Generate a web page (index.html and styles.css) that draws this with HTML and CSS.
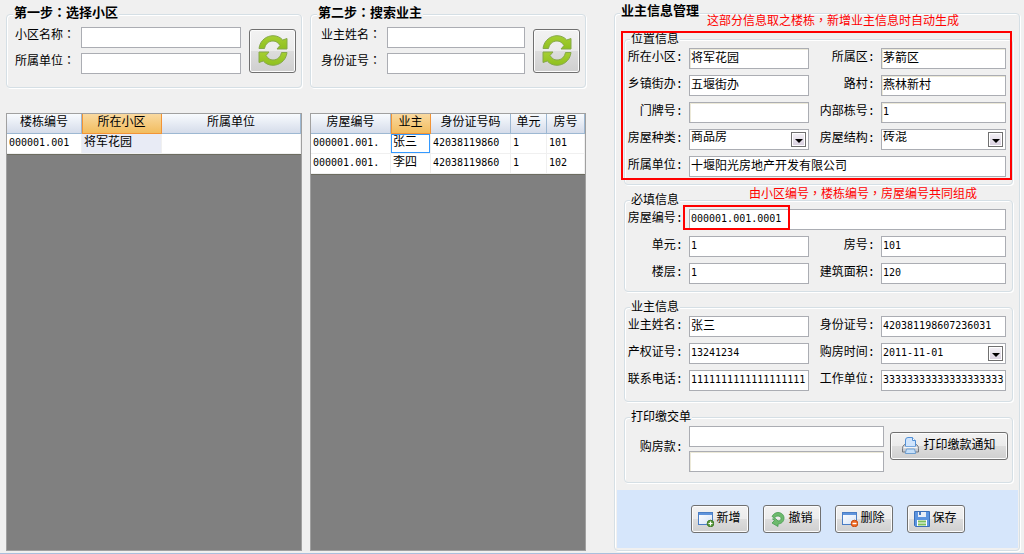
FILE: index.html
```html
<!DOCTYPE html>
<html lang="zh-CN">

<head>
  <meta charset="UTF-8">
  <meta name="viewport" content="width=device-width, initial-scale=1.0">
  <title>业主信息管理</title>
  <link rel="stylesheet" href="styles.css">
</head>

<body>
  <svg class="symbols" width="0" height="0" aria-hidden="true">
    <defs>
      <linearGradient id="green" x1="0" y1="0" x2="0" y2="1">
        <stop offset="0" stop-color="#a6cf32" />
        <stop offset="1" stop-color="#8fc01f" />
      </linearGradient>
      <linearGradient id="paper" x1="0" y1="0" x2="1" y2="1">
        <stop offset="0" stop-color="#ffffff" />
        <stop offset="1" stop-color="#d5e3f7" />
      </linearGradient>
    </defs>
    <symbol id="icon-refresh" viewBox="0 0 30 31">
      <g fill="url(#green)" stroke="#86a84a" stroke-width="1" stroke-linejoin="round">
        <path d="M1 13.500C2 5 9 .7 15 .7c4 0 7.500 1.600 9.700 4.300L29 3.500v10.500H19l3-3.500C20 7.500 18 6 15 6c-4.500 0-7.500 3-8.500 7.500z" />
        <path d="M29 17.500C28 26 21 30.300 15 30.300c-4 0-7.500-1.600-9.700-4.300L1 27.500V17h10l-3 3.500c2 3 4 4.500 7 4.500 4.500 0 7.500-3 8.500-7.500z" />
      </g>
    </symbol>
    <symbol id="icon-window" viewBox="0 0 16 16">
      <rect x=".5" y="1.500" width="14" height="12" fill="url(#paper)" stroke="#4a7dc4" />
      <path d="M1 2h13v2H1z" fill="#5f94dc" />
    </symbol>
  </svg>

  <main class="page">
    <section class="column">
      <fieldset class="step">
        <legend>第一步<span class="punct" lang="zh-TW">：</span>选择小区</legend>
        <div class="search">
          <div class="search-fields">
            <label for="areaName">小区名称<span class="punct" lang="zh-TW">：</span></label>
            <input id="areaName" type="text">
            <label for="areaUnit">所属单位<span class="punct" lang="zh-TW">：</span></label>
            <input id="areaUnit" type="text">
          </div>
          <button type="button" class="refresh" aria-label="刷新"><svg width="30" height="31"><use href="#icon-refresh" /></svg></button>
        </div>
      </fieldset>

      <div class="grid-view">
        <table>
          <colgroup>
            <col class="w75">
            <col class="w80">
            <col>
          </colgroup>
          <thead>
            <tr>
              <th>楼栋编号</th>
              <th class="sorted">所在小区</th>
              <th>所属单位</th>
            </tr>
          </thead>
          <tbody>
            <tr>
              <td class="num">000001.001</td>
              <td class="picked">将军花园</td>
              <td></td>
            </tr>
          </tbody>
        </table>
      </div>
    </section>

    <section class="column">
      <fieldset class="step step-two">
        <legend>第二步<span class="punct" lang="zh-TW">：</span>搜索业主</legend>
        <div class="search">
          <div class="search-fields">
            <label for="findName">业主姓名<span class="punct" lang="zh-TW">：</span></label>
            <input id="findName" type="text">
            <label for="findCard">身份证号<span class="punct" lang="zh-TW">：</span></label>
            <input id="findCard" type="text">
          </div>
          <button type="button" class="refresh" aria-label="搜索"><svg width="30" height="31"><use href="#icon-refresh" /></svg></button>
        </div>
      </fieldset>

      <div class="grid-view">
        <table>
          <colgroup>
            <col class="w80">
            <col class="w40">
            <col class="w80">
            <col class="w36">
            <col>
          </colgroup>
          <thead>
            <tr>
              <th>房屋编号</th>
              <th class="sorted">业主</th>
              <th>身份证号码</th>
              <th>单元</th>
              <th>房号</th>
            </tr>
          </thead>
          <tbody>
            <tr>
              <td class="num">000001.001.</td>
              <td class="focused">张三</td>
              <td class="num">42038119860</td>
              <td class="num">1</td>
              <td class="num">101</td>
            </tr>
            <tr>
              <td class="num">000001.001.</td>
              <td>李四</td>
              <td class="num">42038119860</td>
              <td class="num">1</td>
              <td class="num">102</td>
            </tr>
          </tbody>
        </table>
      </div>
    </section>

    <section class="column manage-column">
      <fieldset class="manage">
        <legend>业主信息管理</legend>

        <div class="group">
          <fieldset>
            <legend>位置信息</legend>
            <div class="form">
              <label for="area">所在小区:</label>
              <input id="area" class="locked" type="text" value="将军花园" readonly>
              <label for="district">所属区:</label>
              <input id="district" class="locked" type="text" value="茅箭区" readonly>

              <label for="town">乡镇街办:</label>
              <input id="town" type="text" value="五堰街办">
              <label for="road">路村:</label>
              <input id="road" class="locked" type="text" value="燕林新村" readonly>

              <label for="door">门牌号:</label>
              <input id="door" class="locked" type="text" readonly>
              <label for="building">内部栋号:</label>
              <input id="building" class="locked num" type="text" value="1" readonly>

              <label for="kind">房屋种类:</label>
              <div class="combo">
                <select id="kind">
                  <option>商品房</option>
                </select>
                <span class="arrow"></span>
              </div>
              <label for="structure">房屋结构:</label>
              <div class="combo">
                <select id="structure">
                  <option>砖混</option>
                </select>
                <span class="arrow"></span>
              </div>

              <label for="unitName">所属单位:</label>
              <input id="unitName" class="wide" type="text" value="十堰阳光房地产开发有限公司">
            </div>
          </fieldset>
          <div class="mark mark-location"></div>
          <p class="note note-location">这部分信息取之楼栋<span class="punct" lang="zh-TW">，</span>新增业主信息时自动生成</p>
        </div>

        <div class="group">
          <fieldset>
            <legend>必填信息</legend>
            <div class="form">
              <label for="houseNo">房屋编号:</label>
              <div class="wide house-no">
                <input id="houseNo" class="num" type="text" value="000001.001.0001">
                <div class="mark mark-house"></div>
              </div>

              <label for="entrance">单元:</label>
              <input id="entrance" class="num" type="text" value="1">
              <label for="room">房号:</label>
              <input id="room" class="num" type="text" value="101">

              <label for="floor">楼层:</label>
              <input id="floor" class="num" type="text" value="1">
              <label for="size">建筑面积:</label>
              <input id="size" class="num" type="text" value="120">
            </div>
          </fieldset>
          <p class="note note-house">由小区编号<span class="punct" lang="zh-TW">，</span>楼栋编号<span class="punct" lang="zh-TW">，</span>房屋编号共同组成</p>
        </div>

        <div class="group">
          <fieldset class="roomy">
            <legend>业主信息</legend>
            <div class="form">
              <label for="owner">业主姓名:</label>
              <input id="owner" type="text" value="张三">
              <label for="card">身份证号:</label>
              <input id="card" class="num" type="text" value="420381198607236031">

              <label for="deed">产权证号:</label>
              <input id="deed" class="num" type="text" value="13241234">
              <label for="bought">购房时间:</label>
              <div class="combo">
                <input id="bought" class="num" type="text" value="2011-11-01">
                <button type="button" class="arrow" aria-label="选择日期"></button>
              </div>

              <label for="phone">联系电话:</label>
              <input id="phone" class="num" type="text" value="1111111111111111111">
              <label for="work">工作单位:</label>
              <input id="work" class="num" type="text" value="33333333333333333333">
            </div>
          </fieldset>
        </div>

        <div class="group">
          <fieldset class="roomy print">
            <legend>打印缴交单</legend>
            <div class="payment">
              <label for="payment">购房款:</label>
              <div class="payment-fields">
                <input id="payment" type="text">
                <input class="locked" type="text" aria-label="购房款大写" readonly>
              </div>
              <button type="button" class="btn btn-print">
                <svg width="17" height="17" viewBox="0 0 17 17">
                  <path d="M2.500 7.500h12q2 1.500 2 4v3.500h-16v-3.500q0-2.500 2-4z" fill="#c9ccd1" stroke="#72767c" />
                  <path d="M3.500 9.500V3q0-2.500 2.500-2.500h4.500l3 3v6z" fill="#cfe4fc" stroke="#5290d6" />
                  <path d="M10.500.5v3h3" fill="#fff" stroke="#5290d6" />
                  <path d="M1.500 10.500h14" stroke="#f4f5f6" stroke-width="1.500" />
                  <path d="M4.500 12h8l1.200 4.500H3.300z" fill="#c5dff9" stroke="#6f9fd0" />
                </svg>
                <span>打印缴款通知</span>
              </button>
            </div>
          </fieldset>
        </div>

        <div class="actions">
          <button type="button" class="btn">
            <svg width="16" height="16" viewBox="0 0 16 16">
              <use href="#icon-window" />
              <circle cx="12.500" cy="12.500" r="3.300" fill="#5b9a3c" stroke="#3f7a28" />
              <path d="M12.500 10.500v4M10.500 12.500h4" stroke="#fff" stroke-width="1.200" />
            </svg>
            <span>新增</span>
          </button>
          <button type="button" class="btn">
            <svg width="16" height="16" viewBox="0 0 16 16">
              <path d="M2 5.500C3.500 2.800 5.500 1.500 8 1.500c3.500 0 6 2.500 6 5.500 0 3.500-2.500 5.700-6 6V15.500L2 12l2.500-2.500L2.500 8l3-.5 2.500 2.500c2 0 3-1 3-2.500S9.500 5 8 5C6 5 5 6 4.500 7z" fill="#6dba6d" stroke="#459a50" stroke-width=".8" stroke-linejoin="round" />
            </svg>
            <span>撤销</span>
          </button>
          <button type="button" class="btn">
            <svg width="16" height="16" viewBox="0 0 16 16">
              <use href="#icon-window" />
              <circle cx="12.500" cy="12.500" r="3.300" fill="#ee6a22" stroke="#c94a10" />
              <path d="M10.500 12.500h4" stroke="#fff" stroke-width="1.400" />
            </svg>
            <span>删除</span>
          </button>
          <button type="button" class="btn">
            <svg width="16" height="16" viewBox="0 0 16 16">
              <path d="M.5.5h15v15h-14l-1-1z" fill="#5b94e0" stroke="#3a6fba" />
              <path d="M4 1h8v5H4z" fill="#e8eef7" />
              <path d="M5 1h2v3H5z" fill="#4778bd" />
              <path d="M3 9h10v6H3z" fill="#fff" />
              <path d="M4 10.500h8M4 13.500h8" stroke="#7cc05c" stroke-width="2" />
            </svg>
            <span>保存</span>
          </button>
        </div>
      </fieldset>
    </section>
  </main>
</body>

</html>
```

FILE: styles.css
```css
* {
  box-sizing: border-box;
}

body {
  margin: 0;
  background-color: #f0f0f0;
  color: #000;
}

body,
input,
select,
button {
  font-family: "Liberation Mono", "Noto Sans CJK SC", monospace;
  font-size: 12px;
  line-height: 14px;
}

.symbols {
  position: absolute;
}

.punct {
  font-family: "Noto Sans CJK TC", sans-serif;
}

.page {
  display: grid;
  grid-template-columns: 296fr 276fr 426fr;
  gap: 8px;
  min-height: 100vh;
  padding: 4px 4px 2px 6px;
  border-bottom: 1px solid #a9bfdd;
}

.column {
  display: flex;
  flex-direction: column;
  min-width: 0;
}

.manage-column {
  padding-left: 20px;
}

/* group boxes */

fieldset {
  min-width: 0;
  margin: 0;
  padding: 0 6px 7px 4px;
  border: 1px solid #d5dfe5;
  border-radius: 4px;
  box-shadow: 1px 1px 0 #fff, inset 1px 1px 0 #fff;
}

legend {
  margin-left: 1px;
  padding: 2px 1px 1px;
  background-color: #f0f0f0;
}

.step > legend,
.manage > legend {
  padding: 0 1px 2px;
  font-size: 13px;
  font-weight: bold;
  line-height: 16px;
}

.step {
  padding: 3px 5px 13px 8px;
}

.step > legend {
  margin-left: -2px;
}

.step-two {
  padding-left: 10px;
}

.step-two > legend {
  margin-left: -4px;
}

.search {
  display: flex;
  align-items: center;
  gap: 8px;
}

.search-fields {
  display: grid;
  flex: 1;
  grid-template-columns: 66px 1fr;
  gap: 5px 0;
}

.search-fields label {
  white-space: nowrap;
}

/* text boxes */

input,
select {
  width: 100%;
  min-width: 0;
  height: 21px;
  margin: 0;
  padding: 0 0 4px 1px;
  border: 1px solid #abadb3;
  border-radius: 0;
  background-color: #fff;
  color: #000;
  outline: none;
}

select {
  appearance: none;
}

.num {
  font-family: "DejaVu Sans Mono", monospace;
  font-size: 10px;
}

input.num {
  padding-bottom: 2px;
}

.locked {
  box-shadow: inset 1px 1px 0 #ece9d8;
}

.combo {
  position: relative;
}

.combo select,
.combo input {
  display: block;
}

.arrow {
  position: absolute;
  top: 3px;
  right: 3px;
  width: 15px;
  height: 15px;
  padding: 0;
  border: 1px solid #707070;
  background: linear-gradient(#f4f2f6, #d9cfe0);
  box-shadow: inset 0 0 0 1px #fff;
  pointer-events: none;
}

button.arrow {
  pointer-events: auto;
}

.arrow::after {
  content: "";
  position: absolute;
  top: 6px;
  left: 3px;
  border: 4px solid transparent;
  border-top-color: #000;
  border-bottom: 0;
}

/* buttons */

.btn,
.refresh {
  display: flex;
  align-items: center;
  justify-content: center;
  padding: 0;
  border: 1px solid #707070;
  border-radius: 3px;
  background: linear-gradient(#f2f2f2, #ebebeb 50%, #dddddd 50%, #cfcfcf);
  box-shadow: inset 0 0 0 1px #fcfcfc;
  color: #000;
  cursor: pointer;
}

.refresh {
  width: 47px;
  height: 44px;
}

.btn {
  gap: 2px;
  width: 58px;
  height: 28px;
  padding-bottom: 1px;
}

.btn-print {
  gap: 4px;
  width: 118px;
}

/* data grids */

.grid-view {
  flex: 1;
  margin-top: 25px;
  border: 1px solid #a0a0a0;
  background-color: #808080;
}

table {
  width: 100%;
  border-spacing: 0;
  border-bottom: 1px solid #6c6c60;
  background-color: #fff;
  table-layout: fixed;
}

.w36 {
  width: 36px;
}

.w40 {
  width: 40px;
}

.w75 {
  width: 75px;
}

.w80 {
  width: 80px;
}

th,
td {
  height: 20px;
  overflow: hidden;
  white-space: nowrap;
}

th {
  padding: 0 0 2px;
  border-right: 1px solid #9db8d2;
  border-bottom: 1px solid #9db8d2;
  background: linear-gradient(#f8fbfe, #d5dcea);
  font-weight: normal;
}

th.sorted {
  border-color: #f29436;
  background: linear-gradient(#f9d9a0, #f2bd5f);
  box-shadow: inset 1px 0 0 #f29436;
}

td {
  padding: 0 2px 2px;
  border-right: 1px solid #f0f0f0;
  border-bottom: 1px solid #f0f0f0;
}

td.picked {
  background-color: #e8ebf5;
}

td.focused {
  box-shadow: inset 0 0 0 1px #3399ff;
}

/* owner form */

.manage {
  flex: 1;
  padding: 9px 1px 0 2px;
}

.manage > legend {
  margin-left: 3px;
}

.group {
  position: relative;
  margin: 0 5px 7px 7px;
}

.roomy {
  padding-bottom: 10px;
}

.print {
  padding-right: 4px;
}

.form {
  display: grid;
  grid-template-columns: 54px 120fr 60px 125fr;
  align-items: center;
  gap: 6px;
}

.form label,
.payment label {
  display: flex;
  justify-content: flex-end;
  padding-bottom: 2px;
  white-space: nowrap;
}

.wide {
  grid-column: span 3;
}

.house-no {
  position: relative;
}

.house-no input {
  display: block;
}

.payment {
  display: flex;
  align-items: center;
}

.payment label {
  width: 54px;
}

.payment-fields {
  display: grid;
  flex: 1;
  gap: 4px;
  margin: 0 6px;
}

.payment .btn {
  align-self: flex-start;
  margin-top: 6px;
}

.actions {
  display: flex;
  align-items: center;
  justify-content: center;
  gap: 14px;
  height: 58px;
  padding-left: 20px;
  background-color: #d6e6fb;
}

/* red marks over the form */

.mark {
  position: absolute;
  border: 2px solid #f00;
  pointer-events: none;
}

.mark-location {
  top: 0;
  right: 1px;
  bottom: 5px;
  left: -3px;
}

.mark-house {
  top: -4px;
  left: -6px;
  width: 107px;
  height: 25px;
}

.note {
  position: absolute;
  margin: 0;
  color: #f00;
  white-space: nowrap;
}

.note-location {
  top: -18px;
  left: 83px;
}

.note-house {
  top: -6px;
  left: 125px;
}
```
